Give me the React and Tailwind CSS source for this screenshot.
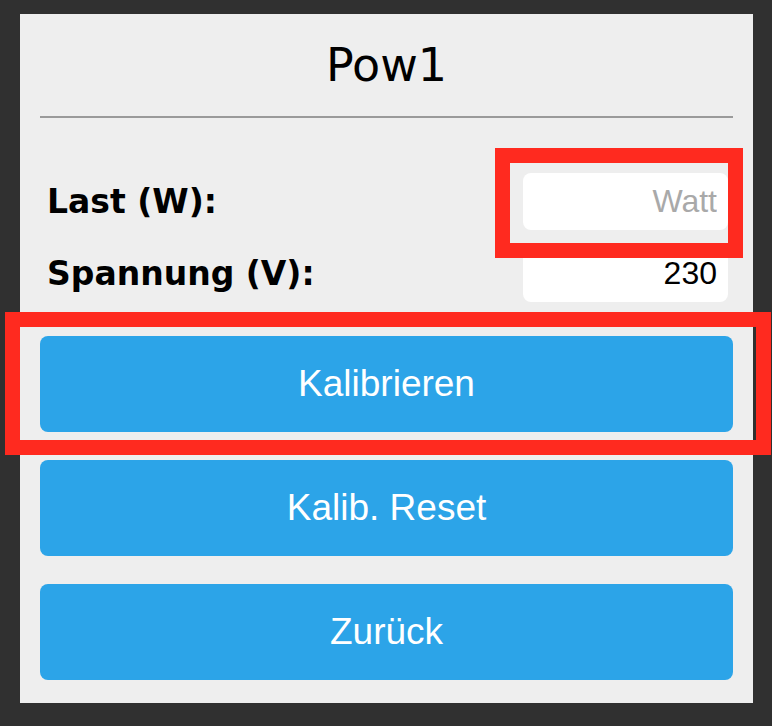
import {useState} from "react";

export default function App() {
  const [watt, setWatt] = useState("");
  const [volt, setVolt] = useState("230");

  return (
    <div className="relative h-[726px] w-[772px] bg-[#303030] pt-[14px] pl-[20px]">
      <div className="flex h-[689px] w-[733px] flex-col bg-[#eeeeee] px-5">
        <div className="flex h-[102px] items-center justify-center">
          <h1 className="text-[46px] leading-none text-black" style={{fontFamily: '"DejaVu Sans", sans-serif'}}>Pow1</h1>
        </div>
        <hr className="border-0 border-t-2 border-[#9a9a9a]" />

        <div className="mt-[55px] flex flex-col gap-[15px] pr-[5px]" style={{fontFamily: '"DejaVu Sans", sans-serif'}}>
          <div className="flex items-center justify-between">
            <label className="ml-[7px] text-[33px] font-bold text-black">Last (W):</label>
            <input
              value={watt}
              onChange={e => setWatt(e.target.value)}
              placeholder="Watt"
              className="h-[57px] w-[205px] rounded-lg bg-white pr-[11px] text-right text-[32px] text-black outline-none placeholder:text-[#a9a9a9]"
              style={{fontFamily: '"Liberation Sans", Arial, sans-serif'}}
            />
          </div>
          <div className="flex items-center justify-between">
            <label className="ml-[7px] text-[33px] font-bold text-black">Spannung (V):</label>
            <input
              value={volt}
              onChange={e => setVolt(e.target.value)}
              className="h-[57px] w-[205px] rounded-lg bg-white pr-[11px] text-right text-[32px] text-black outline-none"
              style={{fontFamily: '"Liberation Sans", Arial, sans-serif'}}
            />
          </div>
        </div>

        <div className="mt-[34px] flex flex-col gap-[28px]" style={{fontFamily: '"Liberation Sans", Arial, sans-serif'}}>
          {["Kalibrieren", "Kalib. Reset", "Zurück"].map(label => (
            <button key={label} className="h-[96px] w-full rounded-lg bg-[#2ca4e8] text-[37px] text-white">
              {label}
            </button>
          ))}
        </div>
      </div>

      {/* red annotation boxes */}
      <div className="absolute left-[495px] top-[148px] h-[110px] w-[248px] border-[15px] border-[#ff2a1f]" />
      <div className="absolute left-[5px] top-[312px] h-[143px] w-[766px] border-[15px] border-[#ff2a1f]" />
    </div>
  );
}
